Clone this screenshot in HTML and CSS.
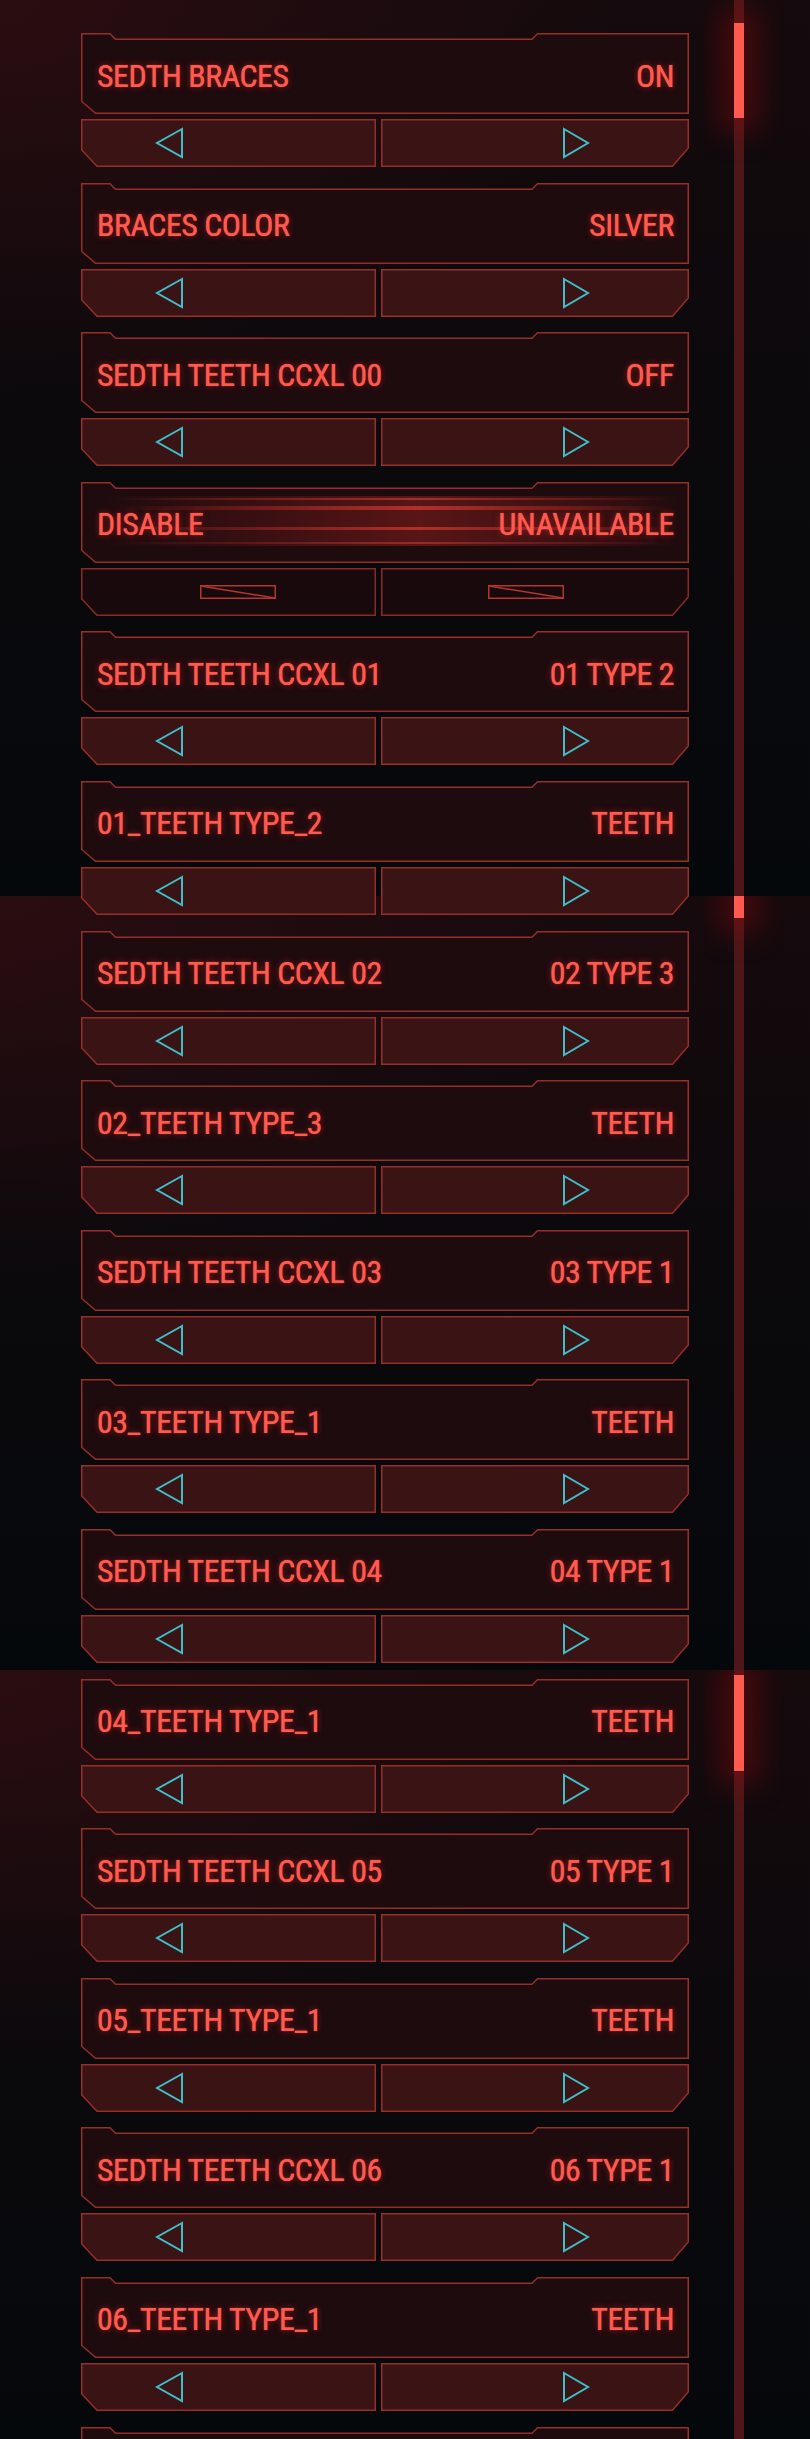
FILE: index.html
```html
<!DOCTYPE html>
<html lang="en">
<head>
<meta charset="utf-8">
<title>Appearance options</title>
<link rel="stylesheet" href="styles.css">
</head>
<body>
<div class="page">
  <main class="list">
    <section class="opt">
      <div class="head"><span>SEDTH BRACES</span><span>ON</span></div>
      <div class="btns">
        <div class="btn prev"><svg viewBox="0 0 30 32" width="30" height="32"><path d="M27 2 L2 16 L27 30 Z"/></svg></div>
        <div class="btn next"><svg viewBox="0 0 30 32" width="30" height="32"><path d="M3 2 L27 16 L3 30 Z"/></svg></div>
      </div>
    </section>
    <section class="opt">
      <div class="head"><span>BRACES COLOR</span><span>SILVER</span></div>
      <div class="btns">
        <div class="btn prev"><svg viewBox="0 0 30 32" width="30" height="32"><path d="M27 2 L2 16 L27 30 Z"/></svg></div>
        <div class="btn next"><svg viewBox="0 0 30 32" width="30" height="32"><path d="M3 2 L27 16 L3 30 Z"/></svg></div>
      </div>
    </section>
    <section class="opt">
      <div class="head"><span>SEDTH TEETH CCXL 00</span><span>OFF</span></div>
      <div class="btns">
        <div class="btn prev"><svg viewBox="0 0 30 32" width="30" height="32"><path d="M27 2 L2 16 L27 30 Z"/></svg></div>
        <div class="btn next"><svg viewBox="0 0 30 32" width="30" height="32"><path d="M3 2 L27 16 L3 30 Z"/></svg></div>
      </div>
    </section>
    <section class="opt disabled">
      <div class="head"><span>DISABLE</span><span>UNAVAILABLE</span></div>
      <div class="btns">
        <div class="btn prev"><svg class="off" viewBox="0 0 76 14" width="76" height="14"><rect x="0.75" y="0.75" width="74.5" height="12.5"/><path d="M1 1 L75 13"/></svg></div>
        <div class="btn next"><svg class="off" viewBox="0 0 76 14" width="76" height="14"><rect x="0.75" y="0.75" width="74.5" height="12.5"/><path d="M1 1 L75 13"/></svg></div>
      </div>
    </section>
    <section class="opt">
      <div class="head"><span>SEDTH TEETH CCXL 01</span><span>01 TYPE 2</span></div>
      <div class="btns">
        <div class="btn prev"><svg viewBox="0 0 30 32" width="30" height="32"><path d="M27 2 L2 16 L27 30 Z"/></svg></div>
        <div class="btn next"><svg viewBox="0 0 30 32" width="30" height="32"><path d="M3 2 L27 16 L3 30 Z"/></svg></div>
      </div>
    </section>
    <section class="opt">
      <div class="head"><span>01_TEETH TYPE_2</span><span>TEETH</span></div>
      <div class="btns">
        <div class="btn prev"><svg viewBox="0 0 30 32" width="30" height="32"><path d="M27 2 L2 16 L27 30 Z"/></svg></div>
        <div class="btn next"><svg viewBox="0 0 30 32" width="30" height="32"><path d="M3 2 L27 16 L3 30 Z"/></svg></div>
      </div>
    </section>
    <section class="opt">
      <div class="head"><span>SEDTH TEETH CCXL 02</span><span>02 TYPE 3</span></div>
      <div class="btns">
        <div class="btn prev"><svg viewBox="0 0 30 32" width="30" height="32"><path d="M27 2 L2 16 L27 30 Z"/></svg></div>
        <div class="btn next"><svg viewBox="0 0 30 32" width="30" height="32"><path d="M3 2 L27 16 L3 30 Z"/></svg></div>
      </div>
    </section>
    <section class="opt">
      <div class="head"><span>02_TEETH TYPE_3</span><span>TEETH</span></div>
      <div class="btns">
        <div class="btn prev"><svg viewBox="0 0 30 32" width="30" height="32"><path d="M27 2 L2 16 L27 30 Z"/></svg></div>
        <div class="btn next"><svg viewBox="0 0 30 32" width="30" height="32"><path d="M3 2 L27 16 L3 30 Z"/></svg></div>
      </div>
    </section>
    <section class="opt">
      <div class="head"><span>SEDTH TEETH CCXL 03</span><span>03 TYPE 1</span></div>
      <div class="btns">
        <div class="btn prev"><svg viewBox="0 0 30 32" width="30" height="32"><path d="M27 2 L2 16 L27 30 Z"/></svg></div>
        <div class="btn next"><svg viewBox="0 0 30 32" width="30" height="32"><path d="M3 2 L27 16 L3 30 Z"/></svg></div>
      </div>
    </section>
    <section class="opt">
      <div class="head"><span>03_TEETH TYPE_1</span><span>TEETH</span></div>
      <div class="btns">
        <div class="btn prev"><svg viewBox="0 0 30 32" width="30" height="32"><path d="M27 2 L2 16 L27 30 Z"/></svg></div>
        <div class="btn next"><svg viewBox="0 0 30 32" width="30" height="32"><path d="M3 2 L27 16 L3 30 Z"/></svg></div>
      </div>
    </section>
    <section class="opt">
      <div class="head"><span>SEDTH TEETH CCXL 04</span><span>04 TYPE 1</span></div>
      <div class="btns">
        <div class="btn prev"><svg viewBox="0 0 30 32" width="30" height="32"><path d="M27 2 L2 16 L27 30 Z"/></svg></div>
        <div class="btn next"><svg viewBox="0 0 30 32" width="30" height="32"><path d="M3 2 L27 16 L3 30 Z"/></svg></div>
      </div>
    </section>
    <section class="opt">
      <div class="head"><span>04_TEETH TYPE_1</span><span>TEETH</span></div>
      <div class="btns">
        <div class="btn prev"><svg viewBox="0 0 30 32" width="30" height="32"><path d="M27 2 L2 16 L27 30 Z"/></svg></div>
        <div class="btn next"><svg viewBox="0 0 30 32" width="30" height="32"><path d="M3 2 L27 16 L3 30 Z"/></svg></div>
      </div>
    </section>
    <section class="opt">
      <div class="head"><span>SEDTH TEETH CCXL 05</span><span>05 TYPE 1</span></div>
      <div class="btns">
        <div class="btn prev"><svg viewBox="0 0 30 32" width="30" height="32"><path d="M27 2 L2 16 L27 30 Z"/></svg></div>
        <div class="btn next"><svg viewBox="0 0 30 32" width="30" height="32"><path d="M3 2 L27 16 L3 30 Z"/></svg></div>
      </div>
    </section>
    <section class="opt">
      <div class="head"><span>05_TEETH TYPE_1</span><span>TEETH</span></div>
      <div class="btns">
        <div class="btn prev"><svg viewBox="0 0 30 32" width="30" height="32"><path d="M27 2 L2 16 L27 30 Z"/></svg></div>
        <div class="btn next"><svg viewBox="0 0 30 32" width="30" height="32"><path d="M3 2 L27 16 L3 30 Z"/></svg></div>
      </div>
    </section>
    <section class="opt">
      <div class="head"><span>SEDTH TEETH CCXL 06</span><span>06 TYPE 1</span></div>
      <div class="btns">
        <div class="btn prev"><svg viewBox="0 0 30 32" width="30" height="32"><path d="M27 2 L2 16 L27 30 Z"/></svg></div>
        <div class="btn next"><svg viewBox="0 0 30 32" width="30" height="32"><path d="M3 2 L27 16 L3 30 Z"/></svg></div>
      </div>
    </section>
    <section class="opt">
      <div class="head"><span>06_TEETH TYPE_1</span><span>TEETH</span></div>
      <div class="btns">
        <div class="btn prev"><svg viewBox="0 0 30 32" width="30" height="32"><path d="M27 2 L2 16 L27 30 Z"/></svg></div>
        <div class="btn next"><svg viewBox="0 0 30 32" width="30" height="32"><path d="M3 2 L27 16 L3 30 Z"/></svg></div>
      </div>
    </section>
    <section class="opt">
      <div class="head"></div>
    </section>
  </main>
  <aside class="scroll">
    <div class="seg s1"><div class="thumb t1"></div></div>
    <div class="seg s2"><div class="thumb t2"></div></div>
    <div class="seg s3"><div class="thumb t3"></div></div>
  </aside>
</div>
</body>
</html>
```

FILE: styles.css
```css
html, body {
  margin: 0;
  padding: 0;
  background: #06090c;
}

.page {
  width: 810px;
  height: 2439px;
  overflow: hidden;
  box-sizing: border-box;
  padding-left: 81px;
  display: grid;
  grid-template-columns: 608px 80px;
  column-gap: 15px;
  align-items: start;
  background-color: #06090c;
  background-image:
    radial-gradient(ellipse 820px 520px at 0 0, rgba(44, 13, 17, 0.9), rgba(44, 13, 17, 0) 75%),
    linear-gradient(to bottom, #150a0d 0%, #0b090c 45%, #05080b 100%),
    radial-gradient(ellipse 820px 520px at 0 0, rgba(44, 13, 17, 0.9), rgba(44, 13, 17, 0) 75%),
    linear-gradient(to bottom, #160a0d 0%, #0b090c 45%, #05080b 100%),
    radial-gradient(ellipse 820px 520px at 0 0, rgba(44, 13, 17, 0.9), rgba(44, 13, 17, 0) 75%),
    linear-gradient(to bottom, #160a0d 0%, #0b090c 45%, #05080b 100%);
  background-size: 810px 896px, 810px 896px, 810px 774px, 810px 774px, 810px 769px, 810px 769px;
  background-position: 0 0, 0 0, 0 896px, 0 896px, 0 1670px, 0 1670px;
  background-repeat: no-repeat;
  font-family: "Roboto Condensed", "Liberation Sans", sans-serif;
}

.list {
  padding-top: 33px;
}

.opt {
  margin-bottom: 15.6px;
}

.head {
  height: 81px;
  box-sizing: border-box;
  padding: 4px 15px 0 16px;
  display: flex;
  justify-content: space-between;
  align-items: center;
  color: #ff5a4f;
  font-size: 32px;
  font-weight: 400;
  letter-spacing: -0.5px;
  text-shadow: 0 0 1px rgba(255, 90, 79, 0.9), 0 0 6px rgba(255, 50, 40, 0.5);
  background: url("data:image/svg+xml,%3Csvg xmlns='http://www.w3.org/2000/svg' width='608' height='81'%3E%3Cpath d='M0.75 0.75H29L34.5 6.25H451L456.5 0.75H607.25V80.25H14.5L0.75 68.5Z' fill='%231e0b0e' stroke='%23962e29' stroke-width='1.5'/%3E%3C/svg%3E") no-repeat 0 0 / 608px 81px;
}

.btns {
  display: flex;
  gap: 5px;
  margin-top: 5px;
  height: 48px;
}

.btn {
  height: 48px;
  display: flex;
  align-items: center;
}

.btn svg path {
  fill: none;
  stroke: #3fbfc8;
  stroke-width: 2;
  stroke-linejoin: miter;
}

.prev {
  width: 295px;
  background: url("data:image/svg+xml,%3Csvg xmlns='http://www.w3.org/2000/svg' width='295' height='48'%3E%3Cpath d='M0.75 0.75H294.25V47.25H16L0.75 31Z' fill='%233a1315' stroke='%23962e29' stroke-width='1.5'/%3E%3C/svg%3E") no-repeat 0 0 / 295px 48px;
}

.next {
  width: 308px;
  background: url("data:image/svg+xml,%3Csvg xmlns='http://www.w3.org/2000/svg' width='308' height='48'%3E%3Cpath d='M0.75 0.75H307.25V29L291.5 47.25H0.75Z' fill='%233a1315' stroke='%23962e29' stroke-width='1.5'/%3E%3C/svg%3E") no-repeat 0 0 / 308px 48px;
}

.prev svg {
  margin-left: 74px;
}

.next svg {
  margin-left: 180px;
}

/* disabled option */
.disabled .head {
  background:
    linear-gradient(to right, rgba(210, 50, 45, 0) 0%, rgba(210, 50, 45, 0.3) 20%, rgba(235, 65, 55, 0.55) 55%, rgba(210, 50, 45, 0.25) 85%, rgba(210, 50, 45, 0)) no-repeat 30px 16px / 560px 2px,
    linear-gradient(to right, rgba(210, 50, 45, 0) 0%, rgba(210, 50, 45, 0.35) 25%, rgba(235, 65, 55, 0.6) 55%, rgba(210, 50, 45, 0.3) 85%, rgba(210, 50, 45, 0)) no-repeat 30px 24px / 560px 4px,
    linear-gradient(to right, rgba(210, 50, 45, 0) 0%, rgba(210, 50, 45, 0.35) 25%, rgba(235, 65, 55, 0.6) 55%, rgba(210, 50, 45, 0.3) 85%, rgba(210, 50, 45, 0)) no-repeat 30px 45px / 560px 3px,
    linear-gradient(to right, rgba(210, 50, 45, 0) 0%, rgba(210, 50, 45, 0.25) 25%, rgba(235, 65, 55, 0.45) 55%, rgba(210, 50, 45, 0.2) 85%, rgba(210, 50, 45, 0)) no-repeat 30px 60px / 560px 2px,
    linear-gradient(to right, rgba(150, 30, 30, 0) 0%, rgba(150, 30, 30, 0.25) 30%, rgba(175, 38, 34, 0.4) 55%, rgba(150, 30, 30, 0.16) 90%, rgba(150, 30, 30, 0)) no-repeat 20px 14px / 580px 50px,
    url("data:image/svg+xml,%3Csvg xmlns='http://www.w3.org/2000/svg' width='608' height='81'%3E%3Cpath d='M0.75 0.75H29L34.5 6.25H451L456.5 0.75H607.25V80.25H14.5L0.75 68.5Z' fill='%231e0b0e' stroke='%23962e29' stroke-width='1.5'/%3E%3C/svg%3E") no-repeat 0 0 / 608px 81px;
}

.disabled .prev {
  background: url("data:image/svg+xml,%3Csvg xmlns='http://www.w3.org/2000/svg' width='295' height='48'%3E%3Cpath d='M0.75 0.75H294.25V47.25H16L0.75 31Z' fill='%23180a0c' stroke='%238a2a26' stroke-width='1.5'/%3E%3C/svg%3E") no-repeat 0 0 / 295px 48px;
}

.disabled .next {
  background: url("data:image/svg+xml,%3Csvg xmlns='http://www.w3.org/2000/svg' width='308' height='48'%3E%3Cpath d='M0.75 0.75H307.25V29L291.5 47.25H0.75Z' fill='%23180a0c' stroke='%238a2a26' stroke-width='1.5'/%3E%3C/svg%3E") no-repeat 0 0 / 308px 48px;
}

.disabled .prev svg {
  margin-left: 119px;
}

.disabled .next svg {
  margin-left: 107px;
}

.btn svg.off rect,
.btn svg.off path {
  fill: none;
  stroke: #b3352f;
  stroke-width: 1.5;
}

/* scrollbar */
.scroll {
  display: flex;
  flex-direction: column;
}

.seg {
  width: 80px;
  overflow: hidden;
  background: linear-gradient(to right, transparent 30px, #4d1719 30px, #4d1719 40px, transparent 40px);
}

.s1 { height: 896px; }
.s2 { height: 774px; }
.s3 { height: 769px; }

.thumb {
  width: 10px;
  margin-left: 30px;
  background: #ff5a50;
  box-shadow: 0 0 30px 14px rgba(140, 10, 14, 0.45);
}

.t1 { margin-top: 23px; height: 95px; }
.t2 { margin-top: 0; height: 22px; }
.t3 { margin-top: 5px; height: 96px; }
```
